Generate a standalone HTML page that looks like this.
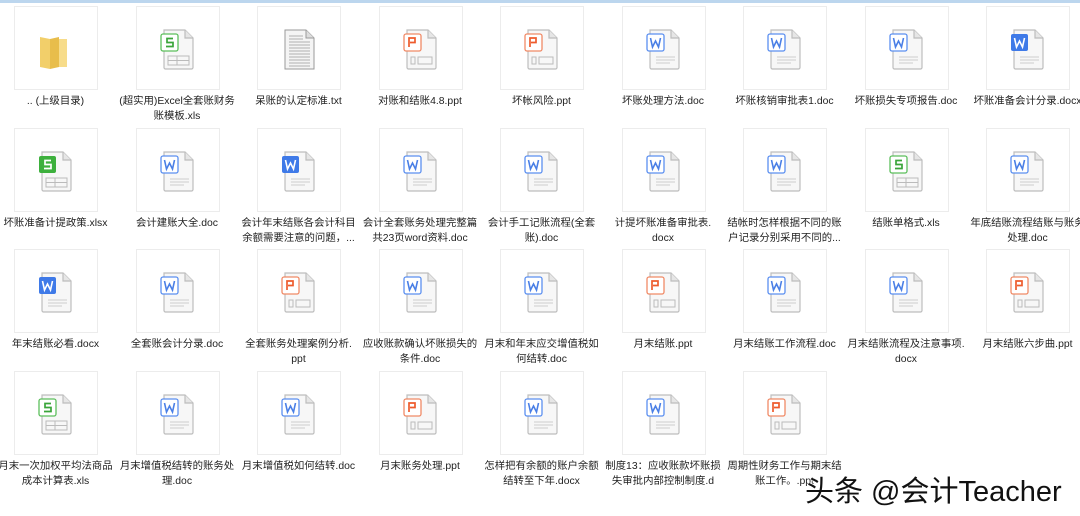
<!DOCTYPE html>
<html><head><meta charset="utf-8"><style>
body{margin:0;width:1080px;height:516px;background:#fff;overflow:hidden;position:relative;font-family:"Liberation Sans","Noto Sans CJK SC",sans-serif}
.top{position:absolute;left:0;top:0;width:1080px;height:3px;background:#bcd6ee}
.it{position:absolute;width:121px}
.box{position:absolute;left:0;top:0;width:82px;height:82px;border:1px solid #ececec;background:#fff}
.box svg{position:absolute;left:23px;top:20px}
.lb{position:absolute;left:-20px;top:88px;width:123px;text-align:center;font-size:10.4px;line-height:15px;color:#222;white-space:nowrap}
.wm{position:absolute;left:805px;top:468px;font-size:29px;color:#111;font-family:"Liberation Sans","Noto Sans CJK SC",sans-serif;text-shadow:0 0 2px #fff,0 0 2px #fff}
</style></head><body>
<div class="top"></div>
<svg width="0" height="0" style="position:absolute">
<defs>
<g id="pg"><path d="M4 3h21l8 8v29.5a1.5 1.5 0 0 1-1.5 1.5h-26A1.5 1.5 0 0 1 4 40.5z" fill="#f7f7f7" stroke="#bdbdbd" stroke-width="1.2"/><path d="M25 3v8h8" fill="#e6e6e6" stroke="#bdbdbd" stroke-width="1.2"/></g>
<g id="doc"><use href="#pg"/><rect x="1" y="7" width="17" height="17" rx="2" fill="#fff" stroke="#5b8ff0" stroke-width="1.3"/><path d="M4.5 11l2 9 3-6 3 6 2-9" fill="none" stroke="#4a7fe6" stroke-width="1.6"/><path d="M10 30h19M10 33h19M10 36h14" stroke="#ccc"/></g>
<g id="docx"><use href="#pg"/><rect x="1" y="7" width="17" height="17" rx="2" fill="#3f7ae8"/><path d="M4.5 11l2 9 3-6 3 6 2-9" fill="none" stroke="#fff" stroke-width="1.6"/><path d="M10 30h19M10 33h19M10 36h14" stroke="#ccc"/></g>
<g id="ppt"><use href="#pg"/><rect x="1" y="7" width="17" height="17" rx="2" fill="#fff" stroke="#f08a66" stroke-width="1.3"/><path d="M6 20V11h6v4.5H7" fill="none" stroke="#ee5b2c" stroke-width="1.7"/><rect x="8" y="30" width="4" height="7" fill="none" stroke="#bbb"/><rect x="15" y="30" width="14" height="7" fill="none" stroke="#bbb"/></g>
<g id="xls"><use href="#pg"/><rect x="1" y="7" width="17" height="17" rx="2" fill="#fff" stroke="#5cbf5c" stroke-width="1.3"/><path d="M13 11.5H7v4h6v4H6" fill="none" stroke="#3aa53a" stroke-width="1.7"/><rect x="8" y="29" width="21" height="9" fill="none" stroke="#bbb"/><path d="M8 33.5h21M17 29v9" stroke="#bbb"/></g>
<g id="xlsx"><use href="#pg"/><rect x="1" y="7" width="17" height="17" rx="2" fill="#3db03d"/><path d="M13 11.5H7v4h6v4H6" fill="none" stroke="#fff" stroke-width="1.7"/><rect x="8" y="29" width="21" height="9" fill="none" stroke="#bbb"/><path d="M8 33.5h21M17 29v9" stroke="#bbb"/></g>
<g id="txt"><path d="M4 3h21l8 8v31H4z" fill="#f4f4f4" stroke="#9a9a9a"/><path d="M25 3v8h8" fill="#ddd" stroke="#9a9a9a"/><path d="M8 9h14M8 12h14M8 15h21M8 18h21M8 21h21M8 24h21M8 27h21M8 30h21M8 33h21M8 36h21M8 39h21" stroke="#999" stroke-width="0.8"/></g>
<g id="fold"><path d="M2 10l10 2v30l-10-2z" fill="#f2cf6a"/><path d="M12 12h17v28H12z" fill="#f7dc8a"/><path d="M12 12l9-2v30l-9 2z" fill="#e8bd4b"/></g>
</defs></svg>
<script>
var items=[
["fold",".. (上级目录)"],["xls","(超实用)Excel全套账财务<br>账模板.xls"],["txt","呆账的认定标准.txt"],["ppt","对账和结账4.8.ppt"],["ppt","坏帐风险.ppt"],["doc","坏账处理方法.doc"],["doc","坏账核销审批表1.doc"],["doc","坏账损失专项报告.doc"],["docx","坏账准备会计分录.docx"],
["xlsx","坏账准备计提政策.xlsx"],["doc","会计建账大全.doc"],["docx","会计年末结账各会计科目<br>余额需要注意的问题，..."],["doc","会计全套账务处理完整篇<br>共23页word资料.doc"],["doc","会计手工记账流程(全套<br>账).doc"],["doc","计提坏账准备审批表.<br>docx"],["doc","结帐时怎样根据不同的账<br>户记录分别采用不同的..."],["xls","结账单格式.xls"],["doc","年底结账流程结账与账务<br>处理.doc"],
["docx","年末结账必看.docx"],["doc","全套账会计分录.doc"],["ppt","全套账务处理案例分析.<br>ppt"],["doc","应收账款确认坏账损失的<br>条件.doc"],["doc","月末和年末应交增值税如<br>何结转.doc"],["ppt","月末结账.ppt"],["doc","月末结账工作流程.doc"],["doc","月末结账流程及注意事项.<br>docx"],["ppt","月末结账六步曲.ppt"],
["xls","月末一次加权平均法商品<br>成本计算表.xls"],["doc","月末增值税结转的账务处<br>理.doc"],["doc","月末增值税如何结转.doc"],["ppt","月末账务处理.ppt"],["doc","怎样把有余额的账户余额<br>结转至下年.docx"],["doc","制度13：应收账款坏账损<br>失审批内部控制制度.d"],["ppt","周期性财务工作与期末结<br>账工作。.ppt"]];
var h="";
items.forEach(function(a,i){var c=i%9,r=Math.floor(i/9);
h+='<div class="it" style="left:'+(14+121.5*c)+'px;top:'+(6+121.5*r)+'px"><div class="box"><svg width="36" height="44" viewBox="0 0 36 44"><use href="#'+a[0]+'"/></svg></div><div class="lb">'+a[1]+'</div></div>';});
document.write(h);
</script>
<div class="wm">头条 @会计Teacher</div>
</body></html>
